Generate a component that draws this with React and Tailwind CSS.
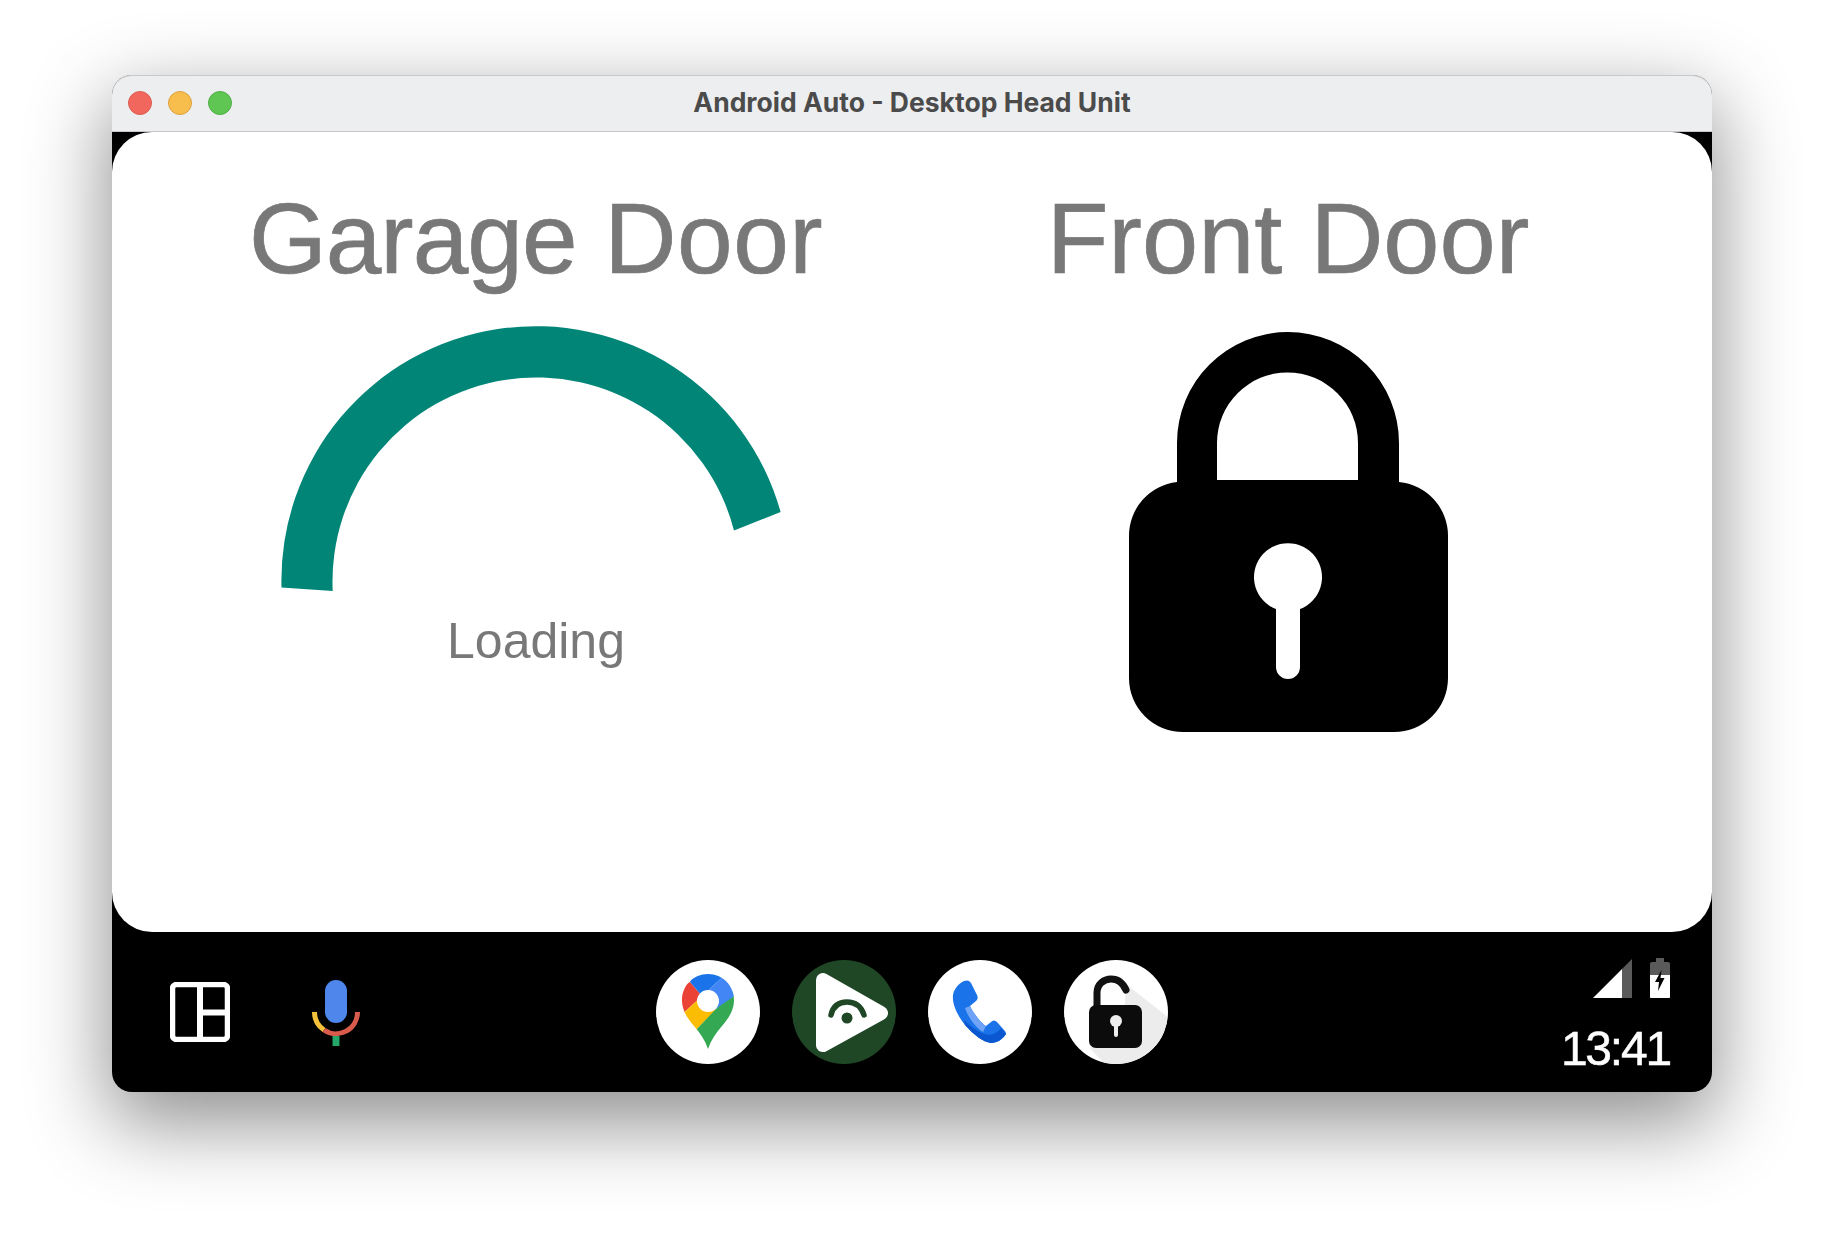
import React from "react";

const SANS = "font-['Liberation_Sans',Arial,sans-serif]";

function Gauge() {
  return (
    <svg width="520" height="276" viewBox="276 322 520 276" className="block">
      <path d="M281.5 587.5 A254.3 254.3 0 0 1 780.6 512 L734 530.5 A204 204 0 0 0 332.7 591 Z" fill="#008577" />
    </svg>
  );
}

function Lock() {
  return (
    <svg width="320" height="400" viewBox="1128 332 320 400" className="block">
      <path
        fillRule="evenodd"
        fill="#000"
        d="M1177 482 V443 A111 111 0 0 1 1399 443 V482 A54 54 0 0 1 1448 536 V678 A54 54 0 0 1 1394 732 H1183 A54 54 0 0 1 1129 678 V536 A54 54 0 0 1 1177 482 Z M1217 480 H1358 V443 A70.5 70.5 0 0 0 1217 443 Z M1276 609 V667 A12 12 0 0 0 1300 667 V609 A34 34 0 1 0 1276 609 Z"
      />
    </svg>
  );
}

function LayoutIcon() {
  return (
    <svg width="60" height="60" viewBox="0 0 60 60" className="block">
      <rect x="2.5" y="2.5" width="55" height="55" rx="4" fill="none" stroke="#fff" strokeWidth="5.5" />
      <path d="M30 3V57M30 30.5H57" fill="none" stroke="#fff" strokeWidth="6" />
    </svg>
  );
}

function Mic() {
  return (
    <svg width="52" height="72" viewBox="0 -4 52 72" className="block">
      <rect x="15" y="0" width="22" height="43" rx="11" fill="#4e86ec" />
      <path d="M4.5 32 A21.5 21.5 0 0 0 14 50" fill="none" stroke="#f4c13b" strokeWidth="5" />
      <path d="M14 50 A21.5 21.5 0 0 0 47.5 32" fill="none" stroke="#d95b4c" strokeWidth="5" />
      <rect x="22.5" y="56" width="7" height="10" fill="#25a768" />
    </svg>
  );
}

function MapsIcon() {
  return (
    <svg width="104" height="104" viewBox="0 0 104 104" className="block">
      <defs>
        <clipPath id="pin">
          <path d="M52 14 C37 14 26 26 26 40 C26 50 31 58 38 66 C44 73 49 80 52 89 C55 80 60 73 66 66 C73 58 78 50 78 40 C78 26 67 14 52 14 Z" />
        </clipPath>
      </defs>
      <circle cx="52" cy="52" r="52" fill="#fff" />
      <g clipPath="url(#pin)">
        <polygon points="34,22 46,36 24,56 20,30" fill="#ea4335" />
        <polygon points="24,56 46,36 60,50 40,70 30,70" fill="#fbbc04" />
        <polygon points="80,28 40,70 40,95 90,95 90,28" fill="#34a853" />
        <polygon points="34,22 46,36 70,14 40,8" fill="#1a73e8" />
        <polygon points="46,36 70,14 90,14 90,28 58,50" fill="#4285f4" />
      </g>
      <circle cx="52" cy="41" r="11" fill="#fff" />
    </svg>
  );
}

function PlayIcon() {
  return (
    <svg width="104" height="104" viewBox="0 0 104 104" className="block">
      <circle cx="52" cy="52" r="52" fill="#1f4726" />
      <path d="M31 20 L89 53 L31 85 Z" fill="#fff" stroke="#fff" strokeWidth="14" strokeLinejoin="round" />
      <path d="M39 55 C41 46 47 42 55 42 C63 42 69 46 72 55" fill="none" stroke="#1f4726" strokeWidth="5.5" strokeLinecap="round" />
      <circle cx="55" cy="58" r="5.5" fill="#1f4726" />
    </svg>
  );
}

function PhoneIcon() {
  return (
    <svg width="104" height="104" viewBox="0 0 104 104" className="block">
      <circle cx="52" cy="52" r="52" fill="#fff" />
      <path d="M36 21 C31 23 26 29 25 35 C24 44 29 55 37 65 C46 75 55 82 63 83 C69 83 75 79 78 74 C78 72 77 71 76 70 L69 62 C67 60 65 60 63 62 L58 66 C53 63 45 53 42 46 L48 41 C50 39 50 37 49 35 L43 23 C41 20 39 20 36 21 Z" fill="#1a73e8" />
      <path d="M42 46 C45 53 53 63 58 66 L55 72 C47 67 40 57 37 48 Z" fill="#6fa3f7" />
      <path d="M37 65 C46 75 55 82 63 83 C69 83 75 79 78 74 L73 68 C69 74 62 76 56 74 C49 71 42 66 36 60 Z" fill="#0b57d0" />
    </svg>
  );
}

function UnlockIcon() {
  return (
    <svg width="104" height="104" viewBox="0 0 104 104" className="block">
      <defs>
        <clipPath id="disc">
          <circle cx="52" cy="52" r="52" />
        </clipPath>
      </defs>
      <circle cx="52" cy="52" r="52" fill="#fff" />
      <g clipPath="url(#disc)">
        <polygon points="62,24 110,62 110,110 46,110 26,88 60,60" fill="#ececec" />
      </g>
      <path d="M33 46 V33 C33 24 40 19 47 19 C54 19 59 23 62 30" fill="none" stroke="#111" strokeWidth="7" strokeLinecap="round" />
      <rect x="25" y="45" width="53" height="43" rx="7" fill="#0c0c0c" />
      <circle cx="52" cy="61" r="6" fill="#eee" />
      <rect x="50" y="61" width="4" height="16" rx="2" fill="#eee" />
    </svg>
  );
}

function StatusIcons() {
  return (
    <div className="flex items-end gap-[18px]">
      <svg width="39" height="39" viewBox="0 0 39 39" className="block">
        <polygon points="0,39 29,10 29,39" fill="#fff" />
        <polygon points="29,10 39,0 39,39 29,39" fill="#5a5a5a" />
      </svg>
      <svg width="20" height="40" viewBox="0 0 20 40" className="block">
        <path d="M0 40 V6 Q0 4 2 4 H6 V0 H14 V4 H18 Q20 4 20 6 V40 Z" fill="#5a5a5a" />
        <path d="M0 17 H20 V39 Q20 40 19 40 H1 Q0 40 0 39 Z" fill="#fff" />
        <polygon points="11.5,12 5,24 9,24 8,33 14.5,20 10.5,20" fill="#000" />
      </svg>
    </div>
  );
}

export default function App() {
  return (
    <div className={`${SANS} h-[1240px] w-[1824px] overflow-hidden bg-white pl-[112px] pt-[75px]`}>
      <div className="w-[1600px] rounded-[20px] bg-black shadow-[0_28px_80px_4px_rgba(0,0,0,0.44)]">
        <div className="flex h-[57px] items-center rounded-t-[20px] border-b border-[#c6c6c8] bg-[#edeef0] shadow-[inset_0_1px_0_#c9c9c9]">
          <div className="flex gap-[16px] pl-[16px]">
            <span className="h-[24px] w-[24px] rounded-full border border-[#dd5b50] bg-[#f1675d]" />
            <span className="h-[24px] w-[24px] rounded-full border border-[#dfa23c] bg-[#f7bd4d]" />
            <span className="h-[24px] w-[24px] rounded-full border border-[#4fae45] bg-[#5fc654]" />
          </div>
          <div className="flex-1 pb-[1px] pr-[120px] text-center font-['Inter',sans-serif] text-[26.5px] font-bold text-[#4b4b4b]">
            Android Auto - Desktop Head Unit
          </div>
        </div>

        <div className="grid h-[800px] grid-cols-[752px_752px] content-start rounded-[40px] bg-white pl-[48px]">
          <div className="flex flex-col items-center pt-[48px] blur-[0.5px]">
            <h1 className="text-[100px] leading-[116px] text-[#787878] [-webkit-text-stroke:0.7px_#787878]">
              <span className="tracking-[-1px]">Garage</span> <span className="tracking-[0.5px]">Door</span>
            </h1>
            <div className="mt-[26px]">
              <Gauge />
            </div>
            <div className="mt-[15px] text-[50px] leading-[56px] text-[#787878]">Loading</div>
          </div>
          <div className="flex flex-col items-center pt-[48px]">
            <h1 className="text-[101px] leading-[116px] text-[#787878] blur-[0.5px] [-webkit-text-stroke:0.7px_#787878]">Front Door</h1>
            <div className="mt-[36px]">
              <Lock />
            </div>
          </div>
        </div>

        <div className="grid h-[160px] grid-cols-[1fr_512px_1fr] items-center">
          <div className="flex items-center gap-[80px] pl-[58px] blur-[0.6px]">
            <LayoutIcon />
            <Mic />
          </div>
          <div className="flex gap-[32px] blur-[0.6px]">
            <MapsIcon />
            <PlayIcon />
            <PhoneIcon />
            <UnlockIcon />
          </div>
          <div className="flex flex-col items-end self-start pr-[42px] pt-[26px] text-white">
            <StatusIcons />
            <div className="mt-[25px] text-[48px] leading-[52px] tracking-[-2.2px] blur-[0.4px] [-webkit-text-stroke:0.5px_#fff]">13:41</div>
          </div>
        </div>
      </div>
    </div>
  );
}
